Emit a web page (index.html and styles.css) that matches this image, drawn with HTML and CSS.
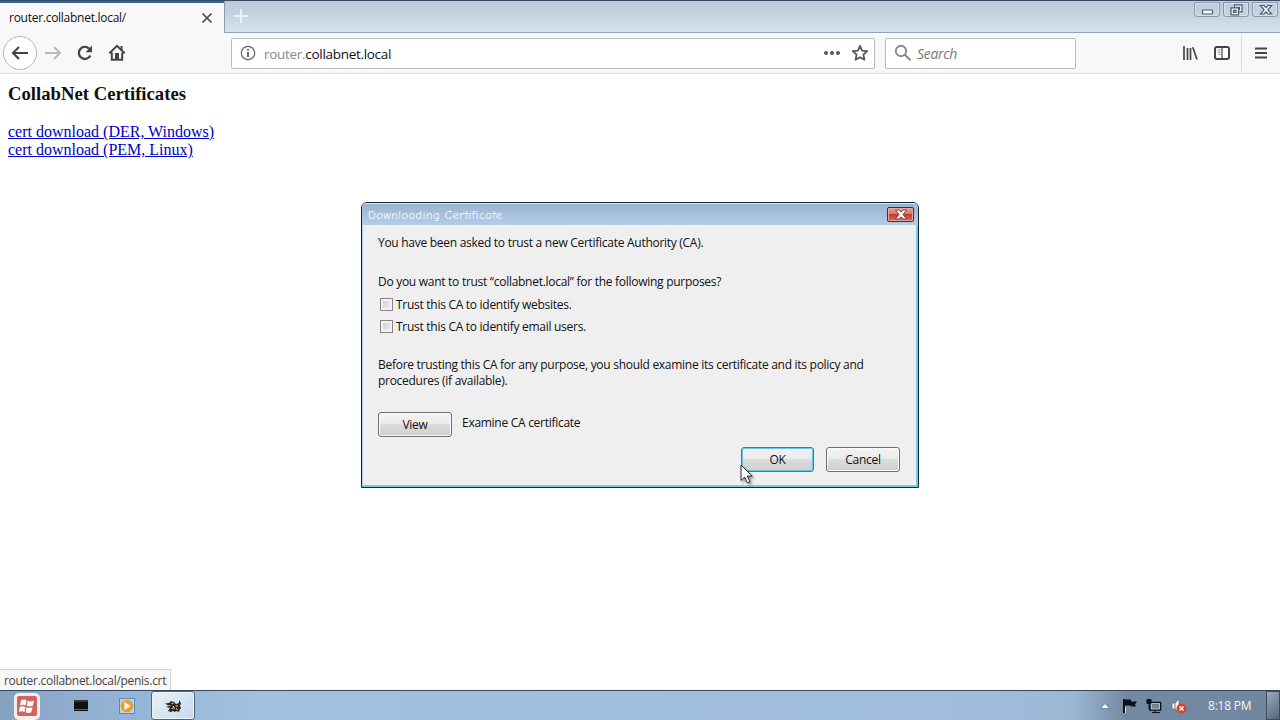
FILE: index.html
```
<!DOCTYPE html>
<html lang="en">
<head>
  <meta charset="UTF-8" />
  <title>router.collabnet.local/</title>
  <link rel="stylesheet" href="styles.css">
</head>
<body>
  <header class="tabbar">
    <div class="tab">
      <span>router.collabnet.local/</span>
      <svg width="12" height="12" viewBox="0 0 12 12"><path d="M1.5 1.5l9 9M10.5 1.5l-9 9" stroke="#444" stroke-width="1.6"/></svg>
    </div>
    <div class="newtab">
      <svg width="16" height="16" viewBox="0 0 16 16"><path d="M8 1v14M1 8h14" stroke="#e8f1fa" stroke-width="2"/></svg>
    </div>
    <div class="controls">
      <div class="control"><svg width="26" height="14" viewBox="0 0 26 14"><rect x="7.5" y="7" width="10" height="4" rx=".8" fill="#f3f7fb" stroke="#4e5a70" stroke-width="1.2"/></svg></div>
      <div class="control"><svg width="26" height="14" viewBox="0 0 26 14"><g fill="#f3f7fb" stroke="#4e5a70" stroke-width="1.2"><path d="M10.500 1.800h7.500v7h-7.500z"/><path d="M13 4.300h2.500v2.200H13z"/><path d="M7 4.800h7.500v7H7z"/><path d="M9.500 7.300h2.500v2H9.500z"/></g></svg></div>
      <div class="control"><svg width="26" height="14" viewBox="0 0 26 14"><path d="M7.500 2.500h3.500l2 2.200 2-2.200h3.500l-3.600 4.300 3.600 4.200H15l-2-2.200-2 2.200H7.500l3.600-4.200z" fill="#f8fafc" stroke="#4e5a70" stroke-width="1.2"/></svg></div>
    </div>
  </header>

  <nav class="toolbar">
    <div class="back"><svg width="18" height="18" viewBox="0 0 18 18"><path d="M17 9H2.500M8 3L2 9l6 6" fill="none" stroke="#444" stroke-width="2.100"/></svg></div>
    <svg class="forward" width="18" height="18" viewBox="0 0 18 18"><path d="M1 9h14.500M10 3l6 6-6 6" fill="none" stroke="#bababa" stroke-width="2"/></svg>
    <svg class="reload" width="18" height="18" viewBox="0 0 18 18"><path d="M14.300 11.500A6 6 0 1 1 13 4.600" fill="none" stroke="#444" stroke-width="2.300"/><path d="M16 1.500v6.700H9.500z" fill="#444"/></svg>
    <svg class="home" width="18" height="18" viewBox="0 0 18 18"><path d="M1.300 9.300L9 1.800l7.700 7.500M3.800 8.500v7.300h10.400V8.500" fill="none" stroke="#444" stroke-width="2"/><path d="M7 9h4v7H7zM12.500 2h2v4h-2z" fill="#444"/></svg>
    <div class="urlbar">
      <svg width="16" height="16" viewBox="0 0 16 16"><circle cx="8" cy="8" r="6.700" fill="none" stroke="#666" stroke-width="1.200"/><path d="M8 7v5M8 4v1.700" stroke="#555" stroke-width="1.700"/></svg>
      <span class="url">router.<b>collabnet.local</b></span>
      <svg class="dots" width="18" height="6" viewBox="0 0 18 6"><g fill="#555"><circle cx="3" cy="3" r="2"/><circle cx="9" cy="3" r="2"/><circle cx="15" cy="3" r="2"/></g></svg>
      <svg width="18" height="18" viewBox="0 0 18 18"><path d="M9 1.900l2.100 4.700 5.100.6-3.800 3.400 1 5.100L9 13.200l-4.400 2.500 1-5.100-3.800-3.400 5.100-.6z" fill="none" stroke="#555" stroke-width="1.800" stroke-linejoin="round"/></svg>
    </div>
    <div class="search">
      <svg width="18" height="18" viewBox="0 0 18 18"><circle cx="7" cy="7" r="5.200" fill="none" stroke="#888" stroke-width="1.900"/><path d="M10.800 10.800l5.800 5.500" stroke="#888" stroke-width="2.200"/></svg>
      <span>Search</span>
    </div>
    <div class="tools">
      <svg width="16" height="16" viewBox="0 0 16 16"><path d="M2 1v14M5.500 3v12M8.500 3v12M10.800 2.300L15 14.500" stroke="#444" stroke-width="1.700"/></svg>
      <svg width="16" height="16" viewBox="0 0 16 16"><rect x="1" y="2" width="14" height="12" rx="2" fill="#fff" stroke="#444" stroke-width="2"/><path d="M8 2v12" stroke="#444" stroke-width="1.200"/><path d="M3.500 5h3M3.500 7.200h3M4.500 9.400h2" stroke="#777" stroke-width=".9"/></svg>
      <div class="menu"><svg width="12" height="14" viewBox="0 0 12 14"><path d="M0 2.500h12M0 7h12M0 11.500h12" stroke="#444" stroke-width="2"/></svg></div>
    </div>
  </nav>

  <main class="page">
    <h3>CollabNet Certificates</h3>
    <a href="#">cert download (DER, Windows)</a><br>
    <a href="#">cert download (PEM, Linux)</a>
    <div class="status">router.collabnet.local/penis.crt</div>
  </main>

  <footer class="taskbar">
    <div class="start">
      <svg width="28" height="28" viewBox="0 0 28 28"><rect x="1" y="1" width="26" height="27" rx="5" fill="#f4eeee"/><rect x="4" y="4" width="20" height="20" rx="2" fill="#cf655d"/><path d="M8 8.500q3-1.800 5.600-.2l-1 5.200q-2.700-1.500-5.600.1zM14.700 8.700q2.800 1.500 6.300-.2l-1.200 5.300q-3 1.600-6 0zM6.700 15q3-1.600 5.700 0l-1 5q-2.700-1.500-5.600.2zM13.500 15.200q3 1.500 6 .1l-1.200 5q-2.900 1.500-5.700 0z" fill="#fff"/></svg>
    </div>
    <svg class="terminal" width="14" height="11" viewBox="0 0 14 11"><rect width="14" height="11" fill="#111"/><path d="M0 1h14M0 9.500h14" stroke="#59616b"/></svg>
    <svg class="player" width="16" height="16" viewBox="0 0 16 16"><rect x=".5" y=".5" width="15" height="15" fill="#b8d6f1" stroke="#528bc8"/><circle cx="8" cy="8" r="6.300" fill="#f39c24"/><path d="M5.500 4l6 4-6 4z" fill="#fff"/></svg>
    <div class="running">
      <svg width="18" height="16" viewBox="0 0 18 16"><path d="M1 5.500l4-.5 2-2 3 1 2 2 3-1v-3l2 3-1 3 1 2-2 3 1 1-4-1-1 1-2-1-2 1-3-1 2-3-4-1 3-1z" fill="#2c241c"/><path d="M7 4.500l3 1-2 1zM4 7l3 .5-2 1zM11 8l3-1-1 2zM7 10.500l2-1 .5 2z" fill="#e6c290"/><path d="M9 8l1.500 2.500M12 10.500l1.500 1" stroke="#fff4dc"/></svg>
    </div>
    <div class="tray">
      <svg width="10" height="6" viewBox="0 0 10 6"><path d="M.5 5.500L5 .5l4.500 5z" fill="#f4f8fc" stroke="#546579" stroke-width=".6"/></svg>
      <svg width="16" height="16" viewBox="0 0 16 16"><path d="M2 1v14" stroke="#0c1118" stroke-width="2"/><path d="M2 1.500h7v2h6l-2 3 1 2H9l-1-1H2z" fill="#0c1118"/><path d="M3.500 9v6" stroke="#d9e1e9"/></svg>
      <svg width="16" height="16" viewBox="0 0 16 16"><path d="M4 4.500h10.500v7.500H4z" fill="#718498" stroke="#0d1218" stroke-width="1.600"/><path d="M5.300 5.500h8.200v5.500H5.300z" fill="none" stroke="#dce5ed" stroke-width=".7"/><path d="M1 1.500h4v4H1zM3 6v5M9 12v2M6 14.500h8" fill="#0d1218" stroke="#0d1218"/></svg>
      <svg width="18" height="16" viewBox="0 0 18 16"><path d="M2 5h3l4-4v14l-4-4H2z" fill="#f4f6f8" stroke="#5c6873" stroke-width=".7"/><path d="M5 5v6" stroke="#778"/><circle cx="11.500" cy="10.500" r="5" fill="#d94131"/><path d="M9.500 8.500l4 4M13.500 8.500l-4 4" stroke="#fff" stroke-width="1.500"/></svg>
      <span class="clock">8:18 PM</span>
      <div class="peek"></div>
    </div>
  </footer>

  <div class="dialog">
    <div class="dialog-title">
      <span>Downloading Certificate</span>
      <div class="dialog-close"><svg width="14" height="11" viewBox="0 0 14 11"><path d="M1.500 1h3.400L7 3.200 9.100 1h3.400L9 5.500l3.500 4.500H9.100L7 7.800 4.900 10H1.500L5 5.500z" fill="#fff" stroke="#723b38" stroke-width=".9"/></svg></div>
    </div>
    <div class="dialog-body">
      <p class="intro">You have been asked to trust a new Certificate Authority (CA).</p>
      <p class="question">Do you want to trust “collabnet.local” for the following purposes?</p>
      <label><span class="box"></span>Trust this CA to identify websites.</label>
      <label><span class="box"></span>Trust this CA to identify email users.</label>
      <p class="warning">Before trusting this CA for any purpose, you should examine its certificate and its policy and<br>procedures (if available).</p>
      <div class="examine">
        <button>View</button>
        <span>Examine CA certificate</span>
      </div>
      <div class="buttons">
        <button class="default">OK</button>
        <button>Cancel</button>
      </div>
    </div>
  </div>

  <svg class="cursor" width="14" height="21" viewBox="0 0 14 21"><path d="M1 1v15.500l3.600-3.400 2.600 5.800 2.700-1.200-2.600-5.600h4.900z" fill="#fff" stroke="#222"/></svg>
</body>
</html>
```

FILE: styles.css
```
* {
  box-sizing: border-box;
}
body {
  margin: 0;
  height: 720px;
  display: flex;
  flex-direction: column;
  overflow: hidden;
  background: #fff;
  font-family: "Open Sans", "Noto Sans", sans-serif;
  font-size: 12px;
  color: #111;
}
svg {
  display: block;
  flex: none;
}
.tabbar {
  display: flex;
  height: 33px;
  border-top: 1px solid #3b4a60;
  border-bottom: 1px solid #94a3b3;
  background: linear-gradient(#bdcbdc, #c4d1df 40%, #d7e4ef);
}
.tab {
  display: flex;
  align-items: center;
  justify-content: space-between;
  width: 224px;
  height: 32px;
  padding: 0 11px 0 9px;
  border-top: 2px solid #2a69b4;
  background: #f9f9fa;
  font-size: 12px;
  letter-spacing: -.27px;
}
.tab span {
  padding-bottom: 1px;
}
.newtab {
  width: 32px;
  padding: 7px 8px;
  border-left: 1px solid #8d9bad;
}
.controls {
  display: flex;
  gap: 3px;
  margin-left: auto;
  padding: 1px 2px 0 0;
}
.control {
  width: 26px;
  height: 15px;
  border: 1px solid #8998aa;
  border-radius: 0 0 3px 3px;
  box-shadow: inset 0 0 0 1px #d5e0eb;
}
.toolbar {
  display: flex;
  align-items: center;
  height: 41px;
  padding: 0 13px 0 3px;
  border-bottom: 1px solid #dcdcdc;
  background: #f8f8f9;
}
.back {
  display: grid;
  place-items: center;
  width: 34px;
  height: 34px;
  border: 1px solid #b5b5b5;
  border-radius: 50%;
  background: #fff;
}
.forward {
  margin-left: 7px;
}
.reload, .home {
  margin-left: 14px;
}
.urlbar, .search {
  display: flex;
  align-items: center;
  height: 31px;
  border: 1px solid #bcbcbc;
  border-radius: 2px;
  background: #fff;
  font-size: 13.5px;
  letter-spacing: -.3px;
}
.urlbar {
  width: 644px;
  margin-left: 105px;
  padding: 0 5px 0 8px;
}
.url {
  margin-left: 8px;
  padding-top: 1px;
  color: #888;
}
.url b {
  color: #111;
  font-weight: normal;
}
.dots {
  margin: 0 10px 0 auto;
}
.search {
  width: 191px;
  margin-left: 10px;
  padding-left: 8px;
  gap: 5px;
  color: #777;
  font-size: 14px;
  font-style: italic;
}
.search span {
  padding-top: 1px;
}
.tools {
  display: flex;
  align-items: center;
  gap: 16px;
  margin-left: auto;
}
.menu {
  display: flex;
  align-items: center;
  height: 36px;
  margin-left: -5px;
  padding-left: 13px;
  border-left: 1px solid #dcdcdc;
}
.page {
  position: relative;
  flex: 1;
  padding: 11px 8px;
  font: 16px/18px "Liberation Serif", serif;
}
.page h3 {
  margin: 0 0 20px;
  font-size: 18.7px;
}
.page a {
  color: #0000c8;
}
.status {
  position: absolute;
  left: 0;
  bottom: 0;
  width: 171px;
  height: 21px;
  padding-left: 4px;
  border: 1px solid #d2d2d2;
  border-width: 1px 1px 0 0;
  background: #f8f8f8;
  color: #444;
  font: 12px/21px "Open Sans", sans-serif;
  letter-spacing: -.29px;
}
.taskbar {
  display: flex;
  align-items: center;
  height: 30px;
  border-top: 1px solid #34465c;
  background: linear-gradient(90deg, #86a1c0, #91b0d2 7%, #a2c1e0 20%, #9fbddb 78%, #9ab6d3 84%, #7389a3 88%, #71869e);
}
.start {
  margin-left: 13px;
}
.terminal {
  margin-left: 33px;
}
.player {
  margin-left: 31px;
}
.running {
  display: grid;
  place-items: center;
  width: 44px;
  height: 29px;
  margin-left: 16px;
  border: 1px solid #4d6580;
  border-radius: 3px;
  background: linear-gradient(135deg, #e9f1f8, #c5d9ed);
  box-shadow: inset 0 0 0 1px #edf5fc;
}
.tray {
  display: flex;
  align-items: center;
  align-self: stretch;
  gap: 8px;
  margin-left: auto;
  color: #f3f7fb;
}
.tray svg:first-child {
  margin-right: 4px;
}
.clock {
  width: 45px;
  margin-left: 12px;
  letter-spacing: -.2px;
  white-space: nowrap;
}
.peek {
  width: 14px;
  height: 29px;
  margin-left: 5px;
  border: 1px solid #3b4b5e;
  background: linear-gradient(135deg, #9baaba, #53677d);
}
.dialog {
  position: absolute;
  left: 361px;
  top: 202px;
  width: 558px;
  height: 286px;
  border: 1px solid #15242e;
  border-radius: 6px 6px 0 0;
  background: #efefef;
  box-shadow: inset -2px -2px #76cce1, inset 1px 0 #b5cddd;
}
.dialog-title {
  display: flex;
  justify-content: space-between;
  height: 22px;
  padding: 3px 4px 0 6px;
  border-top: 1px solid #d6e8f4;
  border-radius: 5px 5px 0 0;
  background: linear-gradient(#99b4d1, #b5cde7);
  color: #f4f9ff;
  font: 12.5px/17px "Comic Sans MS", "Comic Neue", "Open Sans", sans-serif;
  letter-spacing: .4px;
}
.dialog-close {
  display: grid;
  place-items: center;
  width: 27px;
  height: 15px;
  border: 1px solid #5c2327;
  border-radius: 2px;
  background: linear-gradient(#e6a39b, #d77468 45%, #bb3e31 50%, #d46c56);
  box-shadow: inset 0 0 0 1px #eaa79f;
}
.dialog-body {
  padding: 10px 18px 0 16px;
  font-size: 12px;
  line-height: 16px;
  letter-spacing: -.28px;
}
.dialog-body p {
  margin: 0;
  white-space: nowrap;
}
.dialog-body .question {
  margin: 23px 0 7px;
}
.dialog-body label {
  display: flex;
  height: 16px;
  margin-bottom: 6px;
}
.box {
  width: 13px;
  height: 13px;
  margin: 1px 3px 0 2px;
  border: 1px solid #858585;
  background: linear-gradient(135deg, #c5c9cd, #f6f6f6);
  box-shadow: inset 0 0 0 2px #f2f2f2;
}
.dialog-body .warning {
  margin-top: 22px;
}
.examine {
  display: flex;
  gap: 10px;
  height: 25px;
  margin-top: 23px;
}
.examine span {
  padding-top: 3px;
}
.dialog button {
  width: 74px;
  height: 25px;
  padding: 0;
  border: 1px solid #707070;
  border-radius: 3px;
  background: linear-gradient(#f3f3f3, #ebebeb 48%, #dcdcdc 50%, #cfcfcf);
  box-shadow: inset 0 0 0 1px #fafafa;
  color: #111;
  font: inherit;
  letter-spacing: inherit;
}
.buttons {
  display: flex;
  justify-content: flex-end;
  gap: 12px;
  margin-top: 10px;
}
.dialog .default {
  width: 73px;
  border-color: #37809c;
  box-shadow: inset 0 0 0 1px #67c8e5;
}
.cursor {
  position: absolute;
  left: 740px;
  top: 464px;
  filter: drop-shadow(2px 2px 1px rgba(0, 0, 0, .35));
}
```
